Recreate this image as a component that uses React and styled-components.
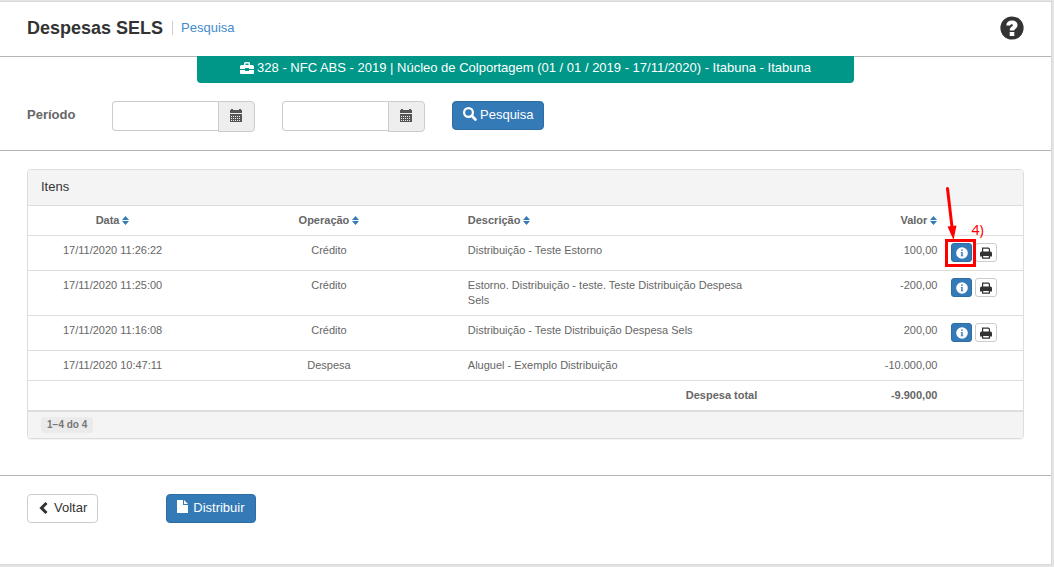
import React from "react";
import styled, { createGlobalStyle, css } from "styled-components";

const line = "#ddd";
const rule = "#b5b5b5";

const GlobalStyle = createGlobalStyle`
  * { box-sizing: border-box; }
  body {
    margin: 0;
    background: #e4e4e4;
    color: #666;
    font: 13px/18px Arial, "Liberation Sans", sans-serif;
  }
  button, input { font: inherit; margin: 0; }
  svg { display: block; flex: none; }
`;

const Page = styled.main`
  min-height: calc(100vh - 3px);
  margin: 1px 2px 2px 0;
  padding-bottom: 40px;
  background: #fff;
  border: 1px solid #d8d8d8;
  border-left: 0;
`;

const Header = styled.header`
  display: flex;
  justify-content: space-between;
  align-items: center;
  height: 55px;
  padding: 0 27px 2px;
  border-bottom: 1px solid ${rule};
`;

const Heading = styled.div`
  display: flex;
  align-items: center;
`;

const Title = styled.h1`
  margin: 0;
  color: #333;
  font-size: 18px;
  line-height: 20px;
  font-weight: bold;
`;

const Crumb = styled.a`
  margin-left: 9px;
  padding-left: 8px;
  border-left: 1px solid #ccc;
  line-height: 14px;
  color: #428bca;
  text-decoration: none;
`;

const HelpButton = styled.button`
  padding: 0;
  border: 0;
  background: none;
  color: #333;
`;

const Banner = styled.div`
  display: flex;
  justify-content: center;
  gap: 3px;
  width: 62.5%;
  margin: -1px auto 0;
  padding: 3px 15px 6px;
  border-radius: 0 0 4px 4px;
  background: #009688;
  color: #fff;
`;

const BannerIcon = styled.span`
  padding-top: 3px;
`;

const Filters = styled.form`
  display: flex;
  align-items: flex-start;
  padding: 18px 27px;
  border-bottom: 1px solid ${rule};
`;

const FilterLabel = styled.label`
  width: 85px;
  padding-top: 5px;
  font-weight: bold;
`;

const DateGroup = styled.div`
  display: flex;
  align-items: flex-start;
  margin-right: 27px;
`;

const DateInput = styled.input`
  width: 106px;
  height: 30px;
  padding: 4px 8px;
  border: 1px solid #ccc;
  border-right: 0;
  border-radius: 4px 0 0 4px;
  background: #fff;
`;

const DateButton = styled.button`
  display: flex;
  align-items: center;
  justify-content: center;
  width: 37px;
  height: 31px;
  padding: 0 1px 2px 0;
  border: 1px solid #ccc;
  border-radius: 0 4px 4px 0;
  background: #eee;
  color: #555;
`;

const primary = css`
  border-color: #2e6da4;
  background: #337ab7;
  color: #fff;
`;

const Button = styled.button`
  display: flex;
  align-items: flex-start;
  gap: ${(p) => p.$gap || 3}px;
  height: 29px;
  padding: 4px 10px;
  border: 1px solid #ccc;
  border-radius: 4px;
  background: #fff;
  color: #333;
  ${(p) => p.$primary && primary}
  svg { margin-top: ${(p) => p.$iconTop || 1}px; }
`;

const Panel = styled.section`
  margin: 18px 27px 36px;
  border: 1px solid ${line};
  border-radius: 4px;
  box-shadow: 0 1px 1px rgba(0, 0, 0, 0.05);
`;

const PanelHeading = styled.h2`
  margin: 0;
  padding: 8px 13px 9px;
  border-radius: 3px 3px 0 0;
  background: #f4f4f4;
  color: #333;
  font-size: 13px;
  line-height: 18px;
  font-weight: normal;
`;

const Table = styled.table`
  width: 100%;
  border-collapse: separate;
  border-spacing: 0;
  table-layout: fixed;
  font-size: 11px;
  line-height: 15px;
`;

const Col = styled.col`
  width: ${(p) => p.$width};
`;

const Cell = styled.td`
  padding: 7px;
  border-top: 1px solid ${line};
  vertical-align: top;
  text-align: ${(p) => p.$align || "left"};
  font-weight: ${(p) => (p.$bold ? "bold" : "normal")};
`;

const SortButton = styled.button`
  display: inline-flex;
  align-items: flex-start;
  gap: 3px;
  padding: 0;
  border: 0;
  background: none;
  color: inherit;
  font-weight: bold;
  vertical-align: top;
  svg { margin-top: 3px; color: #337ab7; }
`;

const Actions = styled.div`
  display: flex;
  gap: 3px;
  height: 20px;
`;

const SmallButton = styled.button`
  display: flex;
  align-items: center;
  justify-content: center;
  width: ${(p) => (p.$primary ? 21 : 22)}px;
  height: 19px;
  padding: 0;
  border: 1px solid #ccc;
  border-radius: 3px;
  background: #fff;
  color: #333;
  ${(p) => p.$primary && primary}
`;

const Marked = styled.div`
  position: relative;
`;

const MarkFrame = styled.span`
  position: absolute;
  inset: -4px -4px -4px -6px;
  border: 3px solid #f00;
  pointer-events: none;
`;

const MarkArrow = styled.svg`
  position: absolute;
  left: -7px;
  bottom: 22px;
  pointer-events: none;
`;

const MarkText = styled.span`
  position: absolute;
  left: 20px;
  bottom: 24px;
  color: #f00;
  font: 14px/18px "Noto Sans", sans-serif;
`;

const PanelFooter = styled.div`
  padding: 5px 13px;
  border-top: 2px solid ${line};
  border-radius: 0 0 3px 3px;
  background: #f4f4f4;
`;

const Count = styled.span`
  display: block;
  width: fit-content;
  padding: 0 6px;
  border-radius: 3px;
  background: #ebebeb;
  color: #777;
  font-size: 10px;
  line-height: 16px;
  font-weight: bold;
`;

const Footer = styled.footer`
  display: flex;
  gap: 68px;
  padding: 18px 27px 0;
  border-top: 1px solid ${rule};
`;

const HelpIcon = () => (
  <svg width="24" height="24" viewBox="0 0 24 24" aria-hidden="true">
    <circle cx="12" cy="12" r="11.6" fill="currentColor" />
    <path d="M6.3 9.6C6.5 6.4 8.6 4.600 12 4.600c3.400 0 5.500 1.800 5.500 4.500 0 2-1 3-2.200 3.800-.8.6-1 .9-1 1.700h-4.600c0-2 .7-3 2.200-4 .7-.5.9-.8.9-1.300 0-.6-.4-1-1.100-1-.9 0-1.300.5-1.400 1.300zM9.700 16h4.600v4H9.700z" fill="#fff" />
  </svg>
);

const BriefcaseIcon = () => (
  <svg width="14" height="12" viewBox="0 0 14 12" fill="currentColor" aria-hidden="true">
    <path fillRule="evenodd" d="M4 3V1.500Q4 0 5.500 0h3Q10 0 10 1.500V3h2.500Q14 3 14 4.500V7H9V6H5v1H0V4.500Q0 3 1.500 3zM5.500 3h3V1.500h-3zM0 8h5v1h4V8h5v3q0 1-1 1H1q-1 0-1-1z" />
  </svg>
);

const CalendarIcon = () => (
  <svg width="12" height="13" viewBox="0 0 12 13" fill="currentColor" aria-hidden="true">
    <path d="M0 1h1V0h2v1h6V0h2v1h1v3H0z" />
    <path fillRule="evenodd" d="M0 5h12v8H0zM1 7v1h1V7zm2 0v1h1V7zm2 0v1h1V7zm2 0v1h1V7zm2 0v1h1V7zM1 9v1h1V9zm2 0v1h1V9zm2 0v1h1V9zm2 0v1h1V9zm2 0v1h1V9zM1 11v1h1v-1zm2 0v1h1v-1zm2 0v1h1v-1zm2 0v1h1v-1zm2 0v1h1v-1z" />
  </svg>
);

const SearchIcon = () => (
  <svg width="14" height="14" viewBox="0 0 14 14" fill="none" stroke="currentColor" aria-hidden="true">
    <circle cx="5.500" cy="5.500" r="4.400" strokeWidth="2.200" />
    <path d="M8.800 8.800l3.600 3.600" strokeWidth="2.800" strokeLinecap="round" />
  </svg>
);

const SortIcon = () => (
  <svg width="7" height="9" viewBox="0 0 7 9" fill="currentColor" aria-hidden="true">
    <path d="M3.500 0L7 4H0zM0 5h7L3.500 9z" />
  </svg>
);

const InfoIcon = () => (
  <svg width="12" height="12" viewBox="0 0 12 12" aria-hidden="true">
    <circle cx="6" cy="6" r="5.800" fill="currentColor" />
    <path d="M5.300 2.600h1.400V4H5.300zM4.800 5h1.900v3.500h.6v.8H4.800v-.8h.5V5.800h-.5z" fill="#337ab7" />
  </svg>
);

const PrintIcon = () => (
  <svg width="12" height="12" viewBox="0 0 12 12" aria-hidden="true">
    <path d="M2.600 5V1.100h5.800l1 1V5" fill="none" stroke="currentColor" strokeWidth="1.200" />
    <path d="M1.500 4.500h9Q12 4.500 12 6v3.500h-2V8H2v1.500H0V6q0-1.500 1.500-1.500z" fill="currentColor" />
    <path d="M2.600 8.300h6.800v2.900H2.600z" fill="#fff" stroke="currentColor" strokeWidth="1.200" />
  </svg>
);

const ChevronIcon = () => (
  <svg width="11" height="12" viewBox="0 0 11 12" fill="none" stroke="currentColor" strokeWidth="3" aria-hidden="true">
    <path d="M8.500 1L3.500 6l5 5" />
  </svg>
);

const FileIcon = () => (
  <svg width="11" height="13" viewBox="0 0 11 13" fill="currentColor" aria-hidden="true">
    <path d="M0 0h6v5h5v8H0zM7 0l4 4H7z" />
  </svg>
);

const columns = [
  { label: "Data", width: "17%", align: "center" },
  { label: "Operação", width: "26.5%", align: "center" },
  { label: "Descrição", width: "30.5%", align: "left" },
  { label: "Valor", width: "18.1%", align: "right" },
];

const rows = [
  { date: "17/11/2020 11:26:22", kind: "Crédito", text: "Distribuição - Teste Estorno", value: "100,00", actions: true, marked: true },
  { date: "17/11/2020 11:25:00", kind: "Crédito", text: "Estorno. Distribuição - teste. Teste Distribuição Despesa Sels", value: "-200,00", actions: true },
  { date: "17/11/2020 11:16:08", kind: "Crédito", text: "Distribuição - Teste Distribuição Despesa Sels", value: "200,00", actions: true },
  { date: "17/11/2020 10:47:11", kind: "Despesa", text: "Aluguel - Exemplo Distribuição", value: "-10.000,00" },
];

const RowActions = ({ marked }) => (
  <Actions>
    <Marked>
      <SmallButton $primary type="button" aria-label="Detalhes"><InfoIcon /></SmallButton>
      {marked && (
        <>
          <MarkFrame />
          <MarkArrow width="20" height="54" viewBox="0 0 20 54" aria-hidden="true">
            <path d="M3.500 1.500L8 40" stroke="#f00" strokeWidth="3" strokeLinecap="round" fill="none" />
            <path d="M3.500 39.500l9-1L9.500 53z" fill="#f00" />
          </MarkArrow>
          <MarkText>4)</MarkText>
        </>
      )}
    </Marked>
    <SmallButton type="button" aria-label="Imprimir"><PrintIcon /></SmallButton>
  </Actions>
);

export default function App() {
  return (
    <>
      <GlobalStyle />
      <Page>
        <Header>
          <Heading>
            <Title>Despesas SELS</Title>
            <Crumb href="#pesquisa">Pesquisa</Crumb>
          </Heading>
          <HelpButton type="button" aria-label="Ajuda"><HelpIcon /></HelpButton>
        </Header>

        <Banner>
          <BannerIcon><BriefcaseIcon /></BannerIcon>
          <span>328 - NFC ABS - 2019 | Núcleo de Colportagem (01 / 01 / 2019 - 17/11/2020) - Itabuna - Itabuna</span>
        </Banner>

        <Filters onSubmit={(e) => e.preventDefault()}>
          <FilterLabel htmlFor="inicio">Período</FilterLabel>
          <DateGroup>
            <DateInput id="inicio" type="text" />
            <DateButton type="button" aria-label="Data inicial"><CalendarIcon /></DateButton>
          </DateGroup>
          <DateGroup>
            <DateInput id="fim" type="text" aria-label="Fim do período" />
            <DateButton type="button" aria-label="Data final"><CalendarIcon /></DateButton>
          </DateGroup>
          <Button $primary type="submit"><SearchIcon />Pesquisa</Button>
        </Filters>

        <Panel>
          <PanelHeading>Itens</PanelHeading>
          <Table>
            <colgroup>
              {columns.map((c) => <Col key={c.label} $width={c.width} />)}
              <Col $width="7.9%" />
            </colgroup>
            <thead>
              <tr>
                {columns.map((c) => (
                  <Cell as="th" scope="col" key={c.label} $align={c.align} $bold>
                    <SortButton type="button">{c.label}<SortIcon /></SortButton>
                  </Cell>
                ))}
                <Cell />
              </tr>
            </thead>
            <tbody>
              {rows.map((r) => (
                <tr key={r.date}>
                  <Cell $align="center">{r.date}</Cell>
                  <Cell $align="center">{r.kind}</Cell>
                  <Cell>{r.text}</Cell>
                  <Cell $align="right">{r.value}</Cell>
                  <Cell>{r.actions && <RowActions marked={r.marked} />}</Cell>
                </tr>
              ))}
            </tbody>
            <tfoot>
              <tr>
                <Cell as="th" scope="row" colSpan={3} $align="right" $bold>Despesa total</Cell>
                <Cell $align="right" $bold>-9.900,00</Cell>
                <Cell />
              </tr>
            </tfoot>
          </Table>
          <PanelFooter><Count>1−4 do 4</Count></PanelFooter>
        </Panel>

        <Footer>
          <Button type="button" $gap={5} $iconTop={3}><ChevronIcon />Voltar</Button>
          <Button type="button" $primary $gap={5}><FileIcon />Distribuir</Button>
        </Footer>
      </Page>
    </>
  );
}
